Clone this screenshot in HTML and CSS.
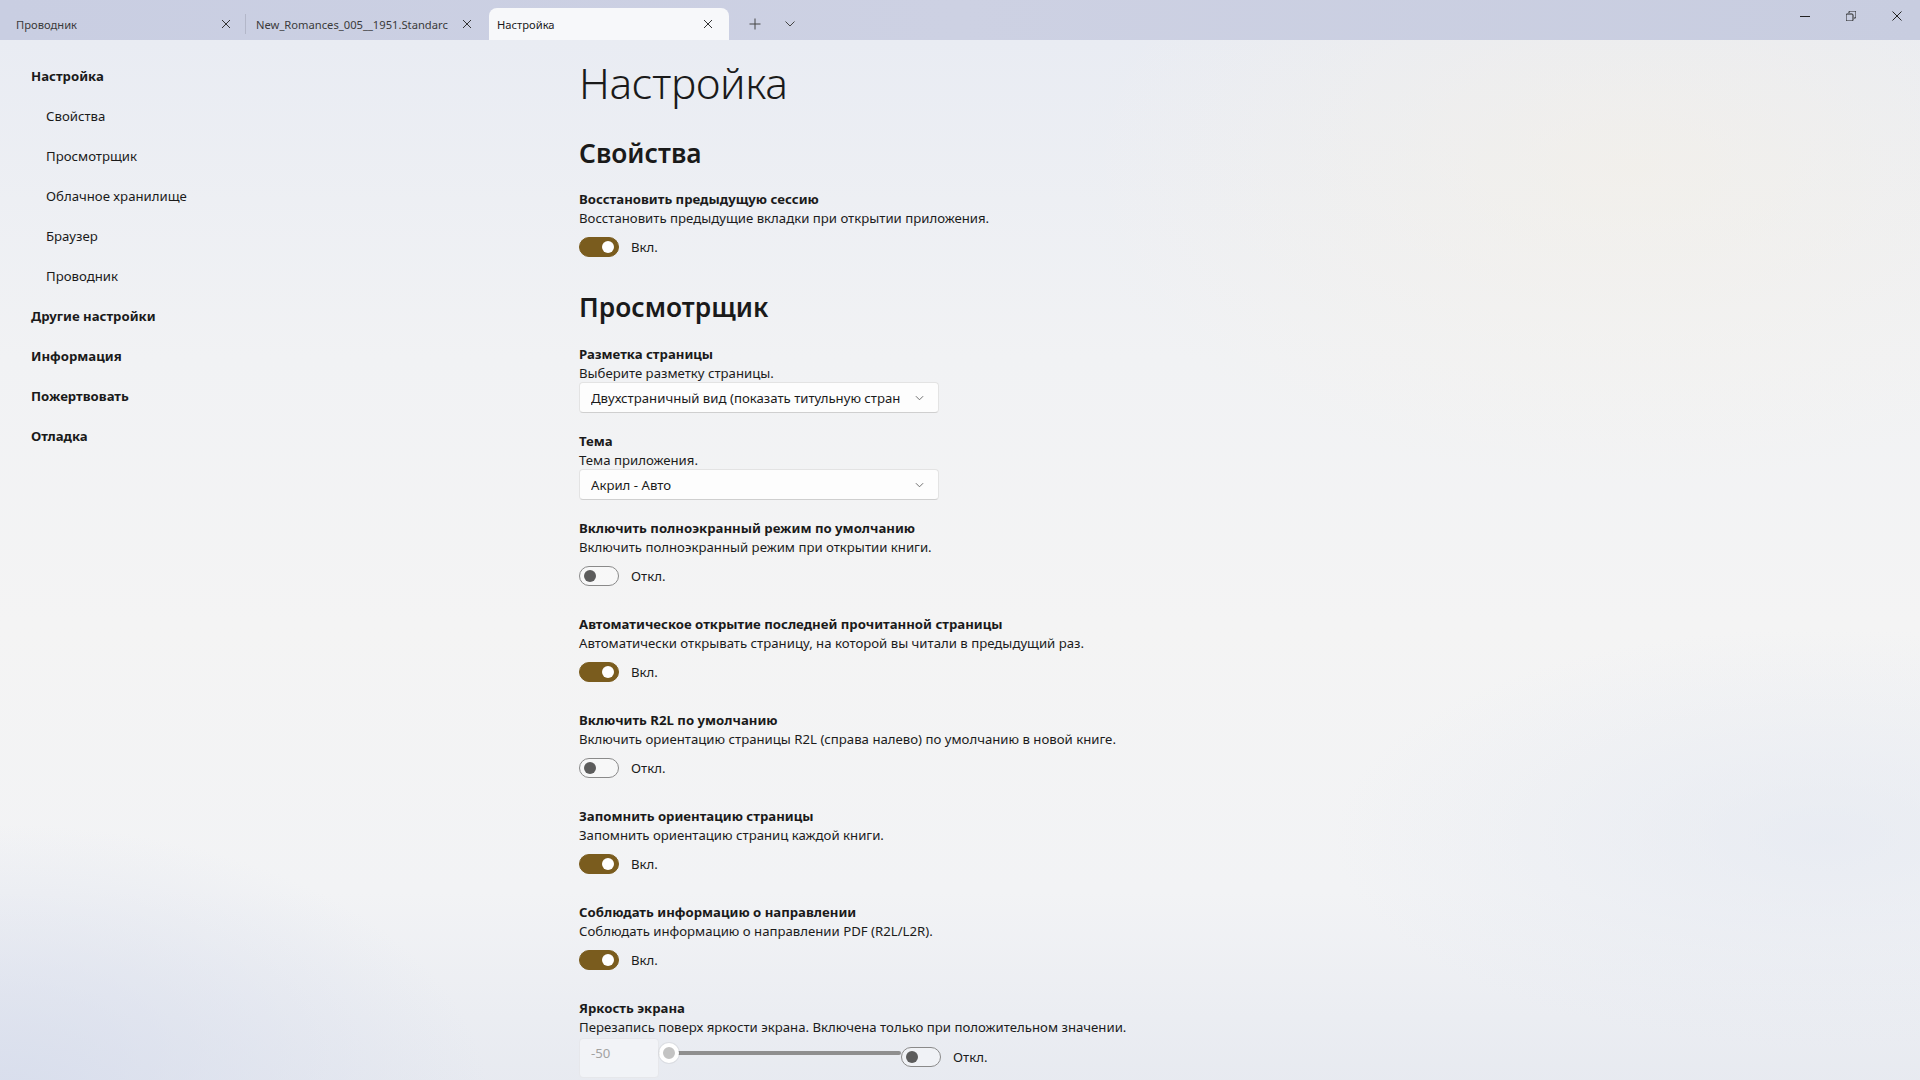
FILE: index.html
```html
<!DOCTYPE html>
<html lang="ru">
<head>
<meta charset="utf-8">
<title>Настройка</title>
<link rel="stylesheet" href="styles.css">
</head>
<body>
<div class="window">
  <header class="titlebar">
    <div class="tabs">
      <div class="tab">
        <span class="tab-title">Проводник</span>
        <svg class="tab-close" viewBox="0 0 10 10"><path d="M1 1L9 9M9 1L1 9"/></svg>
      </div>
      <div class="tab-sep"></div>
      <div class="tab">
        <span class="tab-title">New_Romances_005__1951.Standarc</span>
        <svg class="tab-close" viewBox="0 0 10 10"><path d="M1 1L9 9M9 1L1 9"/></svg>
      </div>
      <div class="tab tab-active">
        <span class="tab-title">Настройка</span>
        <svg class="tab-close" viewBox="0 0 10 10"><path d="M1 1L9 9M9 1L1 9"/></svg>
      </div>
      <svg class="tab-add" viewBox="0 0 12 12"><path d="M6 0.5V11.5M0.5 6H11.5"/></svg>
      <svg class="tab-more" viewBox="0 0 10 6"><path d="M0.5 0.5L5 5L9.5 0.5"/></svg>
    </div>
    <div class="caption">
      <svg class="cap-btn" viewBox="0 0 10 10"><path d="M0 5.5H10"/></svg>
      <svg class="cap-btn" viewBox="0 0 10 10"><path d="M0.5 3.5h5a1 1 0 0 1 1 1v5a1 1 0 0 1-1 1h-5a1 1 0 0 1-1-1v-5a1 1 0 0 1 1-1z M2.5 2.5v-1a1 1 0 0 1 1-1h5a1 1 0 0 1 1 1v5a1 1 0 0 1-1 1h-1" transform="translate(0.5 -0.5)"/></svg>
      <svg class="cap-btn" viewBox="0 0 10 10"><path d="M0.5 0.5L9.5 9.5M9.5 0.5L0.5 9.5"/></svg>
    </div>
  </header>

  <div class="layout">
    <nav class="sidebar">
      <div class="nav-item nav-bold">Настройка</div>
      <div class="nav-item nav-sub">Свойства</div>
      <div class="nav-item nav-sub">Просмотрщик</div>
      <div class="nav-item nav-sub">Облачное хранилище</div>
      <div class="nav-item nav-sub">Браузер</div>
      <div class="nav-item nav-sub">Проводник</div>
      <div class="nav-item nav-bold">Другие настройки</div>
      <div class="nav-item nav-bold">Информация</div>
      <div class="nav-item nav-bold">Пожертвовать</div>
      <div class="nav-item nav-bold">Отладка</div>
    </nav>

    <main class="main">
      <h1 class="page-title">Настройка</h1>

      <h2 class="section-title first">Свойства</h2>
      <div class="setting">
        <div class="s-head">Восстановить предыдущую сессию</div>
        <div class="s-desc">Восстановить предыдущие вкладки при открытии приложения.</div>
        <div class="toggle-row"><span class="toggle on"><span class="knob"></span></span><span class="t-label">Вкл.</span></div>
      </div>

      <h2 class="section-title">Просмотрщик</h2>
      <div class="setting combo-setting">
        <div class="s-head">Разметка страницы</div>
        <div class="s-desc">Выберите разметку страницы.</div>
        <div class="combo"><span class="combo-text">Двухстраничный вид (показать титульную стран</span><svg class="combo-chev" viewBox="0 0 10 6"><path d="M1 1L5 5L9 1"/></svg></div>
      </div>
      <div class="setting combo-setting">
        <div class="s-head">Тема</div>
        <div class="s-desc">Тема приложения.</div>
        <div class="combo"><span class="combo-text">Акрил - Авто</span><svg class="combo-chev" viewBox="0 0 10 6"><path d="M1 1L5 5L9 1"/></svg></div>
      </div>
      <div class="setting">
        <div class="s-head">Включить полноэкранный режим по умолчанию</div>
        <div class="s-desc">Включить полноэкранный режим при открытии книги.</div>
        <div class="toggle-row"><span class="toggle"><span class="knob"></span></span><span class="t-label">Откл.</span></div>
      </div>
      <div class="setting">
        <div class="s-head">Автоматическое открытие последней прочитанной страницы</div>
        <div class="s-desc">Автоматически открывать страницу, на которой вы читали в предыдущий раз.</div>
        <div class="toggle-row"><span class="toggle on"><span class="knob"></span></span><span class="t-label">Вкл.</span></div>
      </div>
      <div class="setting">
        <div class="s-head">Включить R2L по умолчанию</div>
        <div class="s-desc">Включить ориентацию страницы R2L (справа налево) по умолчанию в новой книге.</div>
        <div class="toggle-row"><span class="toggle"><span class="knob"></span></span><span class="t-label">Откл.</span></div>
      </div>
      <div class="setting">
        <div class="s-head">Запомнить ориентацию страницы</div>
        <div class="s-desc">Запомнить ориентацию страниц каждой книги.</div>
        <div class="toggle-row"><span class="toggle on"><span class="knob"></span></span><span class="t-label">Вкл.</span></div>
      </div>
      <div class="setting">
        <div class="s-head">Соблюдать информацию о направлении</div>
        <div class="s-desc">Соблюдать информацию о направлении PDF (R2L/L2R).</div>
        <div class="toggle-row"><span class="toggle on"><span class="knob"></span></span><span class="t-label">Вкл.</span></div>
      </div>
      <div class="setting">
        <div class="s-head">Яркость экрана</div>
        <div class="s-desc">Перезапись поверх яркости экрана. Включена только при положительном значении.</div>
        <div class="slider-row">
          <div class="numbox">-50</div>
          <div class="slider"><span class="thumb"></span><span class="track"></span></div>
          <div class="toggle-row slim"><span class="toggle"><span class="knob"></span></span><span class="t-label">Откл.</span></div>
        </div>
      </div>
    </main>
  </div>
</div>
</body>
</html>
```
FILE: styles.css
```css
* { box-sizing: border-box; }
html, body { margin: 0; padding: 0; }
body {
  width: 1920px;
  height: 1080px;
  overflow: hidden;
  font-family: "Segoe UI", "Noto Sans", "Open Sans", sans-serif;
  color: #1b1b1b;
  background: #eef0f4;
}
.window {
  width: 1920px;
  height: 1080px;
  display: flex;
  flex-direction: column;
}

/* Title bar */
.titlebar {
  height: 40px;
  flex: 0 0 40px;
  background: linear-gradient(90deg, #c9cee2 0%, #cdd1e3 50%, #c8cde0 100%);
  display: flex;
  justify-content: space-between;
  align-items: flex-end;
}
.tabs {
  display: flex;
  align-items: flex-end;
  height: 40px;
}
.tab {
  width: 240px;
  height: 32px;
  display: flex;
  align-items: center;
  justify-content: space-between;
  padding: 0 14px 0 16px;
  font-size: 11.2px;
  color: #3a3a3a;
}
.tab:first-child { width: 245px; padding-left: 16px; }
.tab-sep {
  width: 1px;
  height: 20px;
  background: #b3b7c9;
  align-self: center;
  margin-top: 8px;
  margin-right: 10px;
}
.tab:nth-child(3) { width: 233px; padding-left: 0; padding-right: 17px; }
.tab-title { white-space: nowrap; overflow: hidden; }
.tab-close {
  width: 10px;
  height: 10px;
  flex: 0 0 10px;
  fill: none;
  stroke: #333;
  stroke-width: 1;
}
.tab-active {
  width: 240px;
  margin-left: 0;
  background: #f7f8fa;
  border-radius: 8px 8px 0 0;
  color: #1a1a1a;
  padding: 0 16px 0 8px;
}
.tab-add {
  width: 12px;
  height: 12px;
  margin: 0 0 10px 20px;
  fill: none;
  stroke: #444;
  stroke-width: 1;
}
.tab-more {
  width: 10px;
  height: 6px;
  margin: 0 0 13px 24px;
  fill: none;
  stroke: #444;
  stroke-width: 1;
}
.caption {
  display: flex;
  align-items: center;
  height: 40px;
  padding-bottom: 9px;
  padding-right: 18px;
  gap: 36px;
}
.cap-btn {
  width: 10px;
  height: 10px;
  fill: none;
  stroke: #222;
  stroke-width: 1;
}

/* Layout */
.layout {
  flex: 1;
  display: grid;
  grid-template-columns: 579px 1fr;
  background:
    radial-gradient(ellipse 800px 450px at 85% 12%, rgba(248,241,226,0.45), rgba(248,241,226,0) 70%),
    radial-gradient(ellipse 700px 400px at 0% 100%, rgba(214,220,236,0.9), rgba(214,220,236,0) 70%),
    radial-gradient(ellipse 700px 300px at 95% 75%, rgba(226,231,241,0.6), rgba(226,231,241,0) 70%),
    linear-gradient(180deg, #e9ecf3 0%, #f1f2f4 30%, #f4f4f4 55%, #f2f3f5 80%, #e6e9f0 100%);
}

/* Sidebar */
.sidebar {
  padding: 16px 0 0 31px;
  display: flex;
  flex-direction: column;
}
.nav-item {
  height: 40px;
  line-height: 40px;
  font-size: 13.2px;
  color: #1a1a1a;
  white-space: nowrap;
}
.nav-bold { font-weight: 700; }
.nav-sub { padding-left: 15px; }

/* Main */
.main {
  padding-top: 17px;
  display: flex;
  flex-direction: column;
}
.page-title {
  margin: 0;
  font-size: 42.5px;
  line-height: 52px;
  font-weight: 300;
  color: #1a1a1a;
  letter-spacing: -0.3px;
}
.section-title {
  margin: 4px 0 19px;
  font-size: 26.3px;
  line-height: 36px;
  font-weight: 600;
  color: #1a1a1a;
}
.section-title.first { margin-top: 26px; margin-bottom: 18px; }
.setting {
  display: flex;
  flex-direction: column;
  margin-bottom: 22px;
}
.combo-setting { margin-bottom: 18px; }
.s-head {
  font-size: 13.2px;
  line-height: 20px;
  font-weight: 700;
  color: #1a1a1a;
}
.s-desc {
  font-size: 13.2px;
  line-height: 20px;
  color: #1b1b1b;
  margin-top: -1px;
}
.toggle-row {
  margin-top: 3px;
  height: 32px;
  display: flex;
  align-items: center;
  gap: 12px;
}
.toggle {
  position: relative;
  width: 40px;
  height: 20px;
  border-radius: 10px;
  border: 1px solid #8a8a8a;
  background: rgba(255,255,255,0.35);
}
.toggle .knob {
  position: absolute;
  left: 4px;
  top: 3px;
  width: 12px;
  height: 12px;
  border-radius: 50%;
  background: #5c5c5c;
}
.toggle.on {
  background: #7a5c1e;
  border-color: #7a5c1e;
}
.toggle.on .knob {
  left: auto;
  right: 4px;
  background: #ffffff;
}
.t-label {
  font-size: 13.2px;
  color: #1b1b1b;
}
.combo {
  margin-top: -1px;
  width: 360px;
  height: 31px;
  background: #fdfdfd;
  border: 1px solid #e3e3e3;
  border-bottom-color: #cfcfcf;
  border-radius: 4px;
  display: flex;
  align-items: center;
  justify-content: space-between;
  gap: 8px;
  padding: 0 14px 0 11px;
  font-size: 13.2px;
  color: #1b1b1b;
}
.combo-text { white-space: nowrap; overflow: hidden; }
.combo-chev {
  width: 9px;
  height: 6px;
  flex: 0 0 9px;
  fill: none;
  stroke: #606060;
  stroke-width: 1;
}

/* Slider row */
.slider-row {
  display: flex;
  align-items: flex-start;
  height: 44px;
  margin-top: 1px;
}
.numbox {
  width: 80px;
  height: 40px;
  border: 1px solid #e6e7eb;
  border-radius: 4px;
  background: rgba(245,246,249,0.7);
  color: #a2a2a2;
  font-size: 13.2px;
  padding: 5px 0 0 11px;
}
.slider {
  position: relative;
  width: 242px;
  height: 30px;
  display: flex;
  align-items: center;
}
.slider .track {
  display: block;
  flex: 1;
  height: 4px;
  background: #8f8f8f;
  border-radius: 2px;
}
.slider .thumb {
  position: absolute;
  left: 0;
  top: 5px;
  width: 20px;
  height: 20px;
  border-radius: 50%;
  background: #c3c3c3;
  border: 4px solid #ffffff;
  box-shadow: 0 0 0 1px rgba(0,0,0,0.06);
  z-index: 1;
}
.toggle-row.slim {
  margin-top: 3px;
  height: 32px;
}
```
